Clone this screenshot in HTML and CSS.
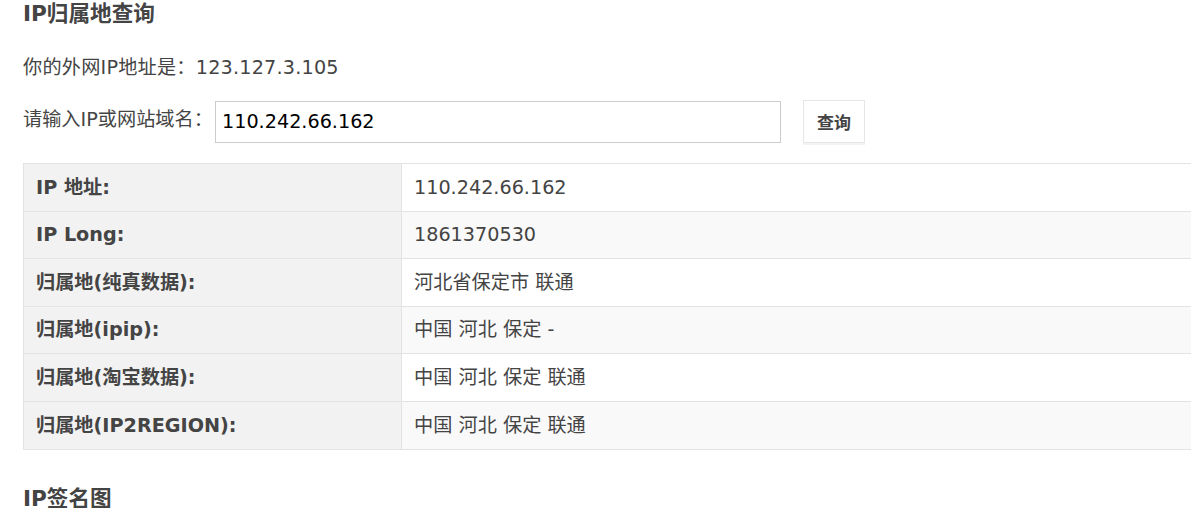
FILE: index.html
```html
<!DOCTYPE html>
<html lang="zh-CN">
<head>
    <meta charset="UTF-8">
    <meta name="viewport" content="width=device-width, initial-scale=1.0">
    <title>IP归属地查询</title>
    <link rel="stylesheet" href="styles.css">
</head>
<body>
<div class="page">
    <h3 class="section-title">IP归属地查询</h3>
    <p class="my-ip">你的外网IP地址是：123.127.3.105</p>
    <form class="query-form" onsubmit="return false;">
        <label class="query-label" for="ipInput">请输入IP或网站域名：</label>
        <input type="text" id="ipInput" class="query-input" value="110.242.66.162">
        <button type="submit" class="query-btn">查询</button>
    </form>
    <table class="result-table">
        <tbody>
            <tr>
                <td class="label">IP 地址:</td>
                <td>110.242.66.162</td>
            </tr>
            <tr>
                <td class="label">IP Long:</td>
                <td>1861370530</td>
            </tr>
            <tr>
                <td class="label">归属地(纯真数据):</td>
                <td>河北省保定市 联通</td>
            </tr>
            <tr>
                <td class="label">归属地(ipip):</td>
                <td>中国 河北 保定 -</td>
            </tr>
            <tr>
                <td class="label">归属地(淘宝数据):</td>
                <td>中国 河北 保定 联通</td>
            </tr>
            <tr>
                <td class="label">归属地(IP2REGION):</td>
                <td>中国 河北 保定 联通</td>
            </tr>
        </tbody>
    </table>
    <h3 class="section-title second">IP签名图</h3>
</div>
</body>
</html>
```

FILE: styles.css
```css
html, body {
    margin: 0;
    padding: 0;
    overflow: hidden;
}
body {
    font-family: "DejaVu Sans", Verdana, "Noto Sans CJK SC", sans-serif;
    font-size: 19.2px;
    color: #444;
    background-color: #fff;
}
.page {
    padding-left: 23px;
}
.section-title {
    margin: 0;
    padding-top: 2px;
    font-size: 21.6px;
    line-height: 24px;
    font-weight: bold;
    color: #444;
}
.section-title.second {
    margin-top: 35px;
}
.my-ip {
    margin: 28px 0 0;
    line-height: 27px;
    letter-spacing: 0.2px;
}
.query-form {
    display: flex;
    align-items: center;
    margin-top: 19px;
    height: 43px;
}
.query-label {
    width: 192px;
    line-height: 27px;
    margin-top: -4px;
}
.query-input {
    box-sizing: border-box;
    width: 566px;
    height: 42px;
    margin: 0 22px 0 0;
    padding: 0 6px;
    border: 1px solid #ccc;
    font-family: inherit;
    font-size: 19.2px;
    color: #000;
    outline: none;
}
.query-btn {
    box-sizing: border-box;
    width: 62px;
    height: 43px;
    padding: 0;
    border: 1px solid #e6e6e6;
    background-color: #fff;
    box-shadow: 0 2px 0 #f3f3f3;
    font-family: "Noto Sans CJK SC", sans-serif;
    font-size: 17px;
    font-weight: bold;
    color: #444;
    cursor: pointer;
}
.result-table {
    width: 1200px;
    margin-top: 20px;
    border-collapse: collapse;
}
.result-table td {
    border: 1px solid #e3e3e3;
    padding: 9.6px 12px;
    line-height: 27.4px;
    vertical-align: top;
    background-color: #fff;
}
.result-table tr:nth-child(even) td {
    background-color: #f9f9f9;
}
.result-table td.label,
.result-table tr:nth-child(even) td.label {
    width: 353px;
    font-weight: bold;
    background-color: #f2f2f2;
}
```
